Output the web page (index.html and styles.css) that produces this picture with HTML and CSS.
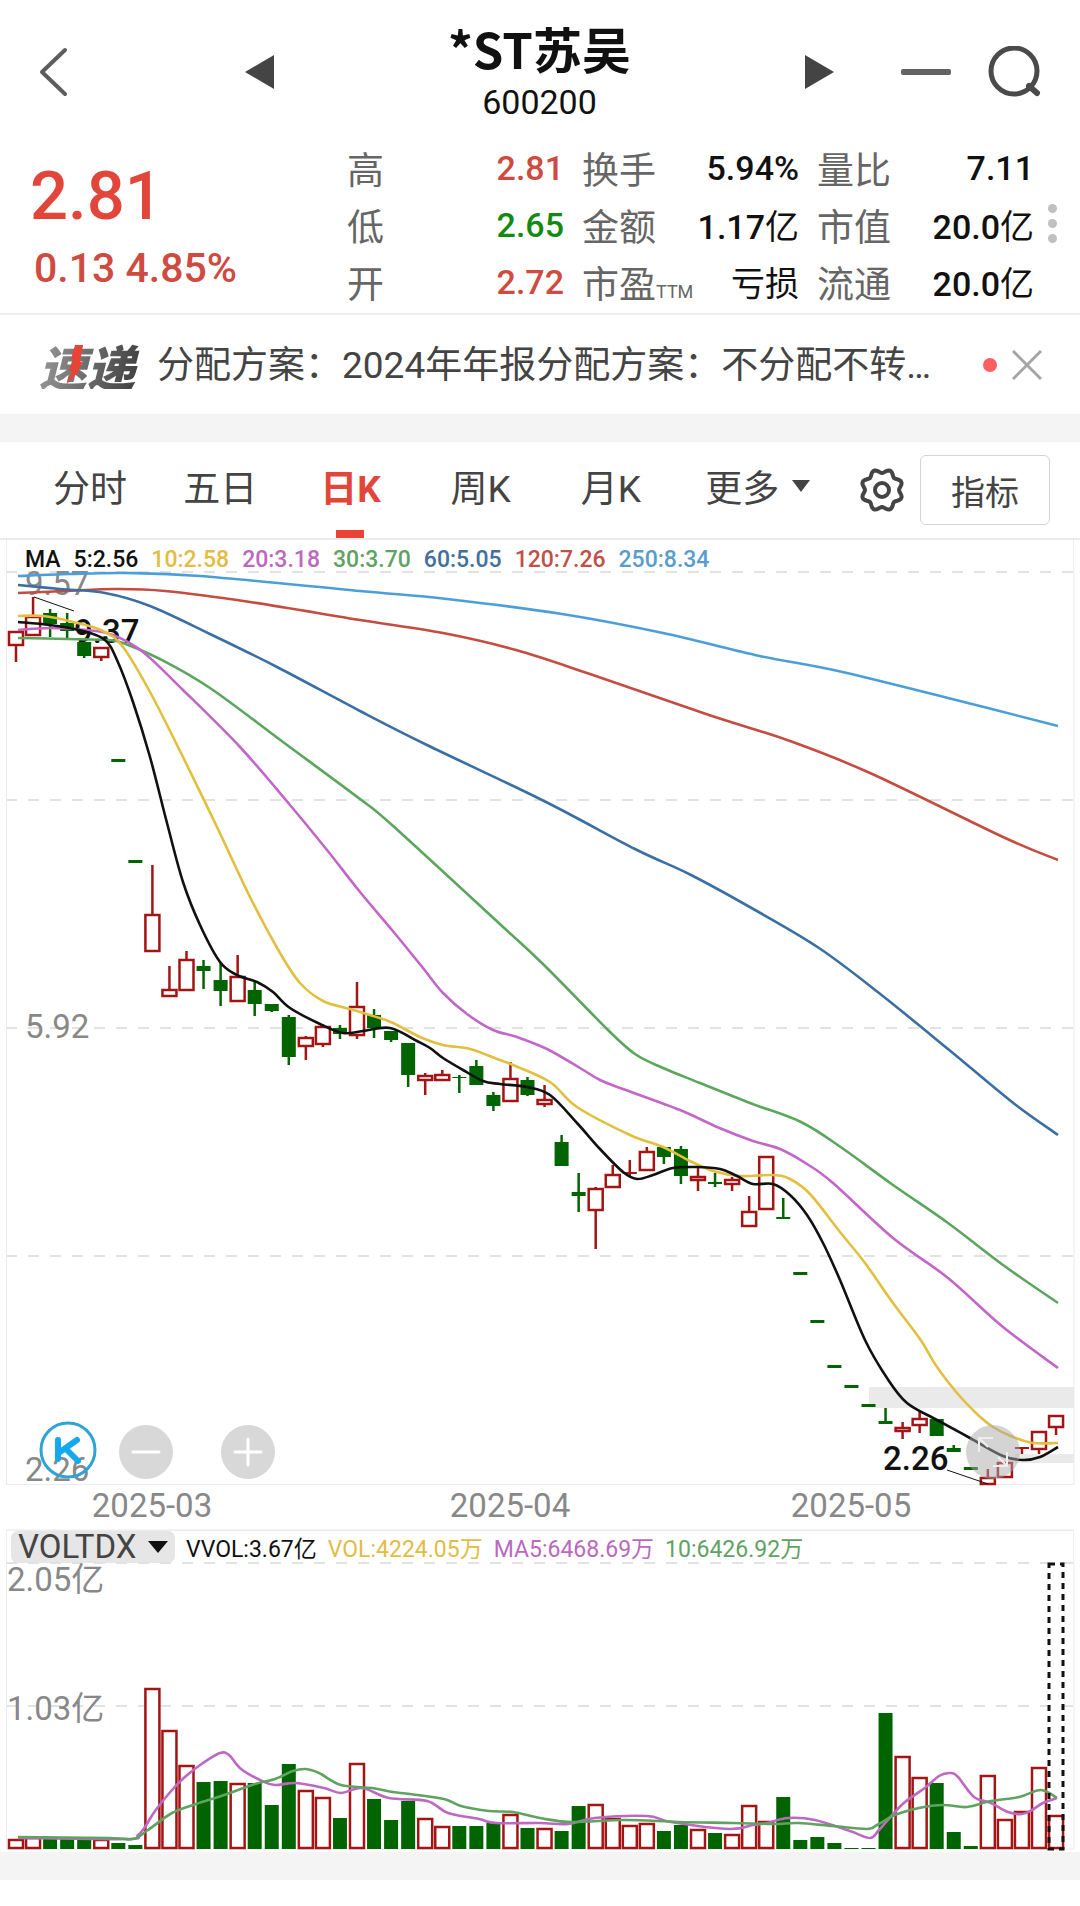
FILE: index.html
```html
<!DOCTYPE html>
<html lang="zh-CN">

<head>
    <meta charset="UTF-8">
    <meta name="viewport" content="width=device-width, initial-scale=1.0">
    <title>*ST苏吴 600200</title>
    <link rel="stylesheet" href="styles.css">
</head>

<body>
    <header class="topbar">
        <button class="icon-btn back" aria-label="返回">
            <svg width="30" height="50" viewBox="0 0 30 50"><path d="M27 3 L4 25 L27 47" fill="none" stroke="#5c5c5c" stroke-width="4" stroke-linecap="round" stroke-linejoin="round"/></svg>
        </button>
        <button class="icon-btn prev" aria-label="上一只">
            <svg width="30" height="34" viewBox="0 0 30 34"><path d="M30 0 V34 L1 17 Z" fill="#444"/></svg>
        </button>
        <div class="stock">
            <h1>*ST苏吴</h1>
            <span class="code">600200</span>
        </div>
        <button class="icon-btn next" aria-label="下一只">
            <svg width="30" height="34" viewBox="0 0 30 34"><path d="M0 0 V34 L29 17 Z" fill="#444"/></svg>
        </button>
        <button class="icon-btn minus" aria-label="删除自选">
            <svg width="50" height="6" viewBox="0 0 50 6"><rect width="50" height="6" rx="2" fill="#626262"/></svg>
        </button>
        <button class="icon-btn search" aria-label="搜索">
            <svg width="54" height="52" viewBox="0 0 54 52"><circle cx="26" cy="25" r="23" fill="none" stroke="#4a4a4a" stroke-width="5"/><path d="M41 40 L49 47" stroke="#4a4a4a" stroke-width="6" stroke-linecap="round"/></svg>
        </button>
    </header>

    <section class="quote">
        <div class="price">
            <div class="now">2.81</div>
            <div class="change">0.13 4.85%</div>
        </div>
        <dl class="stats">
            <div><dt>高</dt><dd class="up">2.81</dd></div>
            <div><dt>换手</dt><dd>5.94%</dd></div>
            <div><dt>量比</dt><dd>7.11</dd></div>
            <div><dt>低</dt><dd class="down">2.65</dd></div>
            <div><dt>金额</dt><dd>1.17<span>亿</span></dd></div>
            <div><dt>市值</dt><dd>20.0<span>亿</span></dd></div>
            <div><dt>开</dt><dd class="up">2.72</dd></div>
            <div><dt>市盈<small>TTM</small></dt><dd><span>亏损</span></dd></div>
            <div><dt>流通</dt><dd>20.0<span>亿</span></dd></div>
        </dl>
        <button class="icon-btn dots" aria-label="更多行情"><i></i><i></i><i></i></button>
    </section>

    <section class="news">
        <span class="news-logo">速递
            <svg class="bolt" viewBox="0 0 20 40"><path d="M11 0 H19 L16 17 H19 L14 25 H16 L2 40 L8 26 H5 L9 14 H7 Z" fill="#e94335"/></svg>
        </span>
        <a class="news-text" href="#">分配方案：2024年年报分配方案：不分配不转…</a>
        <span class="red-dot"></span>
        <button class="icon-btn" aria-label="关闭">
            <svg width="30" height="30" viewBox="0 0 30 30"><path d="M1 1 L29 29 M29 1 L1 29" stroke="#a5a5a5" stroke-width="3"/></svg>
        </button>
    </section>

    <nav class="tabs">
        <button class="tab">分时</button>
        <button class="tab">五日</button>
        <button class="tab active">日K</button>
        <button class="tab">周K</button>
        <button class="tab">月K</button>
        <button class="tab more">更多<svg width="18" height="12" viewBox="0 0 18 12"><path d="M0 0 H18 L9 12 Z" fill="#444"/></svg></button>
        <button class="icon-btn gear" aria-label="设置">
            <svg width="46" height="48" viewBox="-23 -24 46 48"><path id="gear" fill="none" stroke="#444" stroke-width="4" stroke-linejoin="round"/><circle r="7" fill="none" stroke="#444" stroke-width="4"/></svg>
        </button>
        <button class="indicator">指标</button>
    </nav>

    <section class="legend">
        <span>MA</span>
        <span>5:2.56</span>
        <span class="ma10">10:2.58</span>
        <span class="ma20">20:3.18</span>
        <span class="ma30">30:3.70</span>
        <span class="ma60">60:5.05</span>
        <span class="ma120">120:7.26</span>
        <span class="ma250">250:8.34</span>
    </section>

    <section class="chart">
        <svg id="kline" viewBox="0 570 1080 960"></svg>
        <button class="float k-btn" aria-label="K线">
            <svg viewBox="0 0 58 58"><circle cx="29" cy="29" r="27" fill="none" stroke="#2fa3d8" stroke-width="3"/><path d="M19 19 V38 M38 19 L21 31 M27 28 L39 40" fill="none" stroke="#14a9ef" stroke-width="6" stroke-linecap="round"/></svg>
        </button>
        <button class="float zoom-out" aria-label="缩小">
            <svg viewBox="0 0 54 54"><path d="M14 27 H40" stroke="#fff" stroke-width="3" stroke-linecap="round"/></svg>
        </button>
        <button class="float zoom-in" aria-label="放大">
            <svg viewBox="0 0 54 54"><path d="M14 27 H40 M27 14 V40" stroke="#fff" stroke-width="3" stroke-linecap="round"/></svg>
        </button>
        <button class="float expand" aria-label="全屏">
            <svg viewBox="0 0 54 54"><path d="M13 27 V13 H27 M14 14 L22 22 M41 27 V41 H27 M40 40 L32 32" fill="none" stroke="#eee" stroke-width="2"/></svg>
        </button>
    </section>

    <section class="legend vol-legend">
        <button class="voltdx">VOLTDX<svg width="20" height="12" viewBox="0 0 20 12"><path d="M0 0 H20 L10 12 Z" fill="#111"/></svg></button>
        <span>VVOL:3.67亿</span>
        <span class="ma10">VOL:4224.05万</span>
        <span class="ma20">MA5:6468.69万</span>
        <span class="ma30">10:6426.92万</span>
    </section>
    <section class="chart">
        <svg id="volume" viewBox="0 1562 1080 290"></svg>
    </section>
    <div class="band"></div>

    <script src="script.js"></script>
</body>

</html>
```

FILE: styles.css
```css
* {
    box-sizing: border-box;
}

body {
    margin: 0;
    background: #fff;
    color: #111;
    font-family: Roboto, "Noto Sans CJK SC", sans-serif;
}

button {
    padding: 0;
    border: none;
    background: none;
    color: inherit;
    font-family: inherit;
    cursor: pointer;
}

svg {
    display: block;
}

.topbar {
    display: flex;
    align-items: center;
    height: 144px;
    padding: 0 38px;
}

.prev {
    margin-left: 176px;
}

.stock {
    flex: 1;
    padding-top: 4px;
    text-align: center;
}

.stock h1 {
    margin: 0;
    font-family: "Noto Sans CJK SC", sans-serif;
    font-size: 49px;
    line-height: 56px;
    font-weight: 700;
}

.code {
    display: block;
    font-size: 34px;
    line-height: 52px;
}

.minus {
    margin-left: 66px;
}

.search {
    margin-left: 37px;
}

/* quote */
.quote {
    position: relative;
    display: flex;
    height: 171px;
    padding: 0 46px 0 30px;
    border-bottom: 2px solid #ececec;
}

.price {
    flex: 0 0 317px;
    color: #e2463a;
    font-weight: 500;
}

.now {
    padding-top: 12px;
    font-size: 67px;
    line-height: 80px;
}

.change {
    padding-left: 4px;
    font-size: 41px;
    line-height: 64px;
    color: #cf4a40;
}

.stats {
    flex: 1;
    display: grid;
    grid-template-columns: repeat(3, 1fr);
    grid-auto-rows: 57px;
    column-gap: 18px;
    margin: -5px 0 0;
}

.stats div {
    display: flex;
    justify-content: space-between;
    align-items: center;
    white-space: nowrap;
}

.stats dt {
    color: #666;
    font-size: 37px;
}

.stats small {
    font-size: 18px;
}

.stats dd {
    margin: 0;
    font-size: 34px;
    font-weight: 500;
}

.stats dd span {
    font-weight: 400;
}

.stats .up {
    color: #cf4a40;
}

.stats .down {
    color: #128a12;
}

.dots {
    position: absolute;
    right: 23px;
    top: 60px;
    display: grid;
    gap: 6px;
}

.dots i {
    width: 9px;
    height: 9px;
    border-radius: 50%;
    background: #c0c0c0;
}

/* news */
.news {
    display: flex;
    align-items: center;
    height: 127px;
    padding: 0 38px 0 39px;
    border-bottom: 28px solid #f4f4f4;
}

.news-logo {
    position: relative;
    flex: 0 0 118px;
    font-family: "Noto Sans CJK SC", sans-serif;
    font-size: 48px;
    line-height: 48px;
    font-weight: 900;
    font-style: italic;
    color: transparent;
    background: linear-gradient(100deg, #999, #444 80%);
    background-clip: text;
    -webkit-background-clip: text;
}

.bolt {
    position: absolute;
    left: 25px;
    top: 4px;
    width: 20px;
    height: 40px;
}

.news-text {
    flex: 1;
    overflow: hidden;
    padding-top: 3px;
    color: #444;
    font-size: 37px;
    line-height: 54px;
    white-space: nowrap;
    text-decoration: none;
}

.red-dot {
    width: 14px;
    height: 14px;
    margin: 0 15px 0 26px;
    border-radius: 50%;
    background: #ff5f5f;
}

/* tabs */
.tabs {
    display: flex;
    align-items: center;
    height: 98px;
    padding: 0 30px 0 25px;
    border-bottom: 2px solid #ececec;
}

.tab {
    position: relative;
    flex: 0 0 12.7%;
    height: 96px;
    padding-bottom: 8px;
    color: #444;
    font-size: 37px;
}

.tab.active {
    color: #e2463a;
    font-weight: 700;
}

.tab.active::after {
    content: "";
    position: absolute;
    left: 50%;
    bottom: 0;
    width: 28px;
    height: 8px;
    margin-left: -14px;
    background: #e94335;
}

.tab.more {
    display: flex;
    flex-basis: 16%;
    align-items: center;
    justify-content: center;
    gap: 13px;
}

.gear {
    margin-left: auto;
    margin-right: 15px;
}

.indicator {
    width: 130px;
    height: 70px;
    border: 1px solid #d4d4d4;
    border-radius: 6px;
    color: #444;
    font-size: 34px;
}

/* charts */
.legend {
    display: flex;
    align-items: center;
    gap: 13px;
    height: 30px;
    margin: 0 6px;
    padding: 9px 0 0 18px;
    border: 1px solid #eee;
    border-width: 0 1px;
    font-size: 23px;
    line-height: 24px;
    font-weight: 500;
    white-space: nowrap;
}

.ma10 {
    color: #e0bd44;
}

.ma20 {
    color: #bb69be;
}

.ma30 {
    color: #60a262;
}

.ma60 {
    color: #41709f;
}

.ma120 {
    color: #bf5147;
}

.ma250 {
    color: #5a9dcc;
}

.chart {
    position: relative;
}

.chart > svg {
    width: 100%;
    height: auto;
    overflow: visible;
}

.chart text {
    font-size: 33px;
    fill: #888;
}

.chart text.mark {
    font-weight: 500;
    fill: #111;
}

.float {
    position: absolute;
    bottom: calc(5% + 3px);
    width: 5%;
    border-radius: 50%;
    background: #d8d8d8;
}

.k-btn {
    left: 3.6%;
    width: 58px;
    background: none;
}

.zoom-out {
    left: 11%;
}

.zoom-in {
    left: calc(20% + 5px);
}

.expand {
    left: calc(89% + 5px);
    background: rgba(170, 170, 170, 0.5);
}

.vol-legend {
    gap: 11px;
    height: 32px;
    padding: 0 0 0 4px;
    border-top-width: 1px;
    font-weight: 400;
}

.vol-legend span {
    padding-top: 6px;
}

.voltdx {
    display: flex;
    align-items: center;
    justify-content: space-between;
    width: 164px;
    height: 32px;
    padding: 0 7px;
    border-radius: 7px;
    background: #e6e6e6;
    color: #444;
    font-size: 33px;
    line-height: 32px;
}

.band {
    height: 28px;
    background: #f4f4f4;
}
```

FILE: script.js
```js
const RED = '#a31515';
const GREEN = '#006400';
const STEP = 17.05;

// [colour, high, body top, body bottom, low]
const candles = [
    ['r', 631, 631, 646, 662], ['r', 597, 616, 636, 636], ['g', 609, 613, 624, 637], ['g', 613, 623, 631, 638],
    ['g', 642, 642, 656, 658], ['r', 647, 647, 658, 661], ['g', 759, 759, 762, 762], ['g', 860, 860, 863, 863],
    ['r', 865, 914, 952, 952], ['r', 966, 989, 997, 997], ['r', 951, 959, 991, 991], ['g', 960, 966, 971, 989],
    ['g', 963, 980, 991, 1006], ['r', 955, 976, 1002, 1002], ['g', 982, 990, 1004, 1016], ['g', 1004, 1004, 1011, 1012],
    ['g', 1015, 1017, 1057, 1065], ['r', 1036, 1037, 1047, 1060], ['r', 1024, 1026, 1045, 1047], ['g', 1025, 1028, 1034, 1039],
    ['r', 982, 1006, 1036, 1039], ['g', 1009, 1015, 1028, 1038], ['g', 1031, 1031, 1040, 1042], ['g', 1043, 1043, 1075, 1087],
    ['r', 1073, 1075, 1081, 1095], ['r', 1070, 1074, 1081, 1081], ['g', 1075, 1077, 1078, 1093], ['g', 1060, 1066, 1085, 1085],
    ['g', 1092, 1095, 1106, 1111], ['r', 1062, 1078, 1102, 1102], ['g', 1077, 1080, 1095, 1096], ['r', 1085, 1099, 1105, 1107],
    ['g', 1135, 1142, 1166, 1166], ['g', 1173, 1192, 1196, 1212], ['r', 1187, 1188, 1211, 1249], ['r', 1165, 1174, 1188, 1188],
    ['r', 1160, 1172, 1174, 1177], ['r', 1147, 1151, 1171, 1171], ['g', 1147, 1147, 1157, 1164], ['g', 1146, 1149, 1176, 1184],
    ['r', 1167, 1176, 1181, 1191], ['g', 1173, 1182, 1184, 1187], ['r', 1177, 1179, 1185, 1191], ['r', 1196, 1211, 1227, 1227],
    ['r', 1156, 1156, 1210, 1210], ['g', 1198, 1217, 1219, 1219], ['g', 1272, 1272, 1275, 1275], ['g', 1320, 1320, 1323, 1323],
    ['g', 1365, 1365, 1368, 1368], ['g', 1385, 1385, 1388, 1388], ['g', 1404, 1404, 1407, 1407], ['g', 1408, 1421, 1424, 1424],
    ['r', 1422, 1427, 1432, 1439], ['r', 1411, 1418, 1426, 1433], ['g', 1419, 1419, 1436, 1436], ['g', 1445, 1448, 1452, 1452],
    ['g', 1467, 1467, 1470, 1470], ['r', 1469, 1477, 1485, 1485], ['r', 1462, 1462, 1478, 1478], ['r', 1447, 1447, 1449, 1454],
    ['r', 1431, 1431, 1450, 1454], ['r', 1415, 1415, 1428, 1435]
];

// top of each volume bar
const volumes = [
    1839, 1837, 1839, 1839, 1839, 1839, 1843, 1845, 1688, 1730, 1765, 1782, 1781, 1783, 1783, 1805,
    1764, 1790, 1797, 1818, 1763, 1799, 1820, 1801, 1818, 1826, 1826, 1826, 1823, 1814, 1828, 1828,
    1831, 1806, 1804, 1818, 1825, 1823, 1831, 1825, 1829, 1833, 1834, 1805, 1821, 1797, 1840, 1837,
    1843, 1848, 1848, 1713, 1756, 1777, 1783, 1832, 1846, 1775, 1819, 1811, 1767, 1815
];

const priceLines = [
    ['#4a9fd8', '18,576 70,574 125,573 200,576 360,591 447,599 562,614 663,633 755,655 838,671 948,698 1058,726'],
    ['#c44c40', '18,593 65,591 115,589 165,591 250,602 360,620 443,633 516,650 590,674 709,715 787,740 870,773 1003,837 1058,860'],
    ['#3b6fa3', '18,585 60,589 105,593 150,606 210,634 277,667 360,711 427,745 544,801 635,849 691,875 755,910 819,948 879,993 948,1049 1012,1102 1058,1135'],
    ['#5ba65d', '18,638 67,639 107,640 123,643 160,659 210,688 283,742 360,799 392,825 502,926 544,965 608,1030 635,1054 663,1068 700,1083 750,1103 801,1122 842,1148 893,1185 948,1223 1003,1265 1058,1303'],
    ['#c266c8', '18,630 50,628 87,630 113,635 143,652 183,690 240,747 290,805 327,850 360,892 392,930 423,968 443,993 467,1014 493,1030 517,1037 547,1049 580,1068 600,1080 623,1089 680,1110 717,1127 753,1141 780,1149 807,1164 833,1183 893,1238 948,1278 1003,1327 1058,1368'],
    ['#e2bf3f', '18,616 43,616 73,622 103,631 123,647 150,692 183,757 217,827 250,897 280,953 300,983 323,1001 350,1009 370,1015 393,1023 420,1037 443,1045 470,1049 497,1059 513,1065 550,1082 577,1107 630,1135 663,1147 690,1161 713,1171 740,1176 773,1175 790,1179 810,1194 840,1232 865,1263 893,1303 920,1339 937,1367 957,1393 977,1414 993,1427 1013,1437 1033,1443 1058,1443'],
    ['#111', '18,622 50,625 83,631 105,640 117,660 133,702 150,757 167,823 183,882 200,925 220,962 237,975 257,982 273,992 290,1008 320,1024 343,1033 363,1031 390,1028 417,1041 430,1048 443,1058 463,1070 483,1081 500,1084 527,1087 550,1095 577,1123 600,1149 623,1172 637,1179 653,1175 673,1168 697,1167 720,1169 737,1176 753,1184 773,1184 790,1195 807,1215 823,1243 840,1280 865,1340 887,1378 907,1403 937,1420 970,1438 1003,1456 1023,1460 1040,1457 1058,1447']
];

const volumeLines = [
    ['#bd68c2', '18,1838 127,1839 138,1835 145,1827 155,1811 172,1790 186,1776 203,1763 220,1753 229,1755 241,1769 262,1781 275,1785 296,1783 324,1788 341,1793 362,1788 389,1798 427,1801 448,1813 479,1819 496,1823 540,1823 568,1824 595,1818 647,1816 671,1822 729,1829 753,1825 767,1823 788,1818 815,1820 850,1831 870,1838 879,1830 895,1812 905,1802 926,1787 939,1776 950,1773 958,1777 974,1797 991,1803 1008,1812 1022,1814 1032,1810 1043,1803 1057,1798'],
    ['#5fa361', '18,1837 110,1838 133,1839 148,1830 172,1813 196,1804 224,1795 255,1784 275,1779 293,1771 306,1769 319,1773 341,1785 372,1788 393,1792 410,1794 444,1799 461,1806 489,1811 513,1812 540,1818 571,1822 626,1820 678,1822 733,1823 774,1824 798,1823 833,1826 867,1829 877,1825 895,1815 919,1808 943,1805 967,1807 991,1801 1019,1797 1041,1790 1057,1798']
];

// smooth curve through "x,y x,y ..." points
function curve(points) {
    const p = points.split(' ').map(s => s.split(',').map(Number));
    let d = `M${p[0]}`;
    for (let i = 0; i < p.length - 1; i++) {
        const a = p[i - 1] || p[i], b = p[i], c = p[i + 1], e = p[i + 2] || c;
        d += ` C${b[0] + (c[0] - a[0]) / 6},${b[1] + (c[1] - a[1]) / 6} ${c[0] - (e[0] - b[0]) / 6},${c[1] - (e[1] - b[1]) / 6} ${c}`;
    }
    return d;
}

function drawLines(lines) {
    return lines.map(([color, pts]) => `<path d="${curve(pts)}" fill="none" stroke="${color}" stroke-width="2.6"/>`).join('');
}

function grid(y) {
    return `<path d="M6 ${y} H1074" stroke="#e2e2e2" stroke-width="2" stroke-dasharray="11 11"/>`;
}

function bar(color, x, top, bottom) {
    if (color === 'g' || bottom - top < 4) {
        return `<rect x="${x - 7}" y="${top}" width="14" height="${bottom - top}" fill="${color === 'g' ? GREEN : RED}"/>`;
    }
    return `<rect x="${x - 7}" y="${top + 1}" width="14" height="${bottom - top - 2}" fill="#fff" stroke="${RED}" stroke-width="2.5"/>`;
}

function drawKline() {
    let s = [572, 800, 1028, 1256].map(grid).join('');
    s += '<path d="M6.5 570 V1484 M1074 570 V1484 M6 1484.5 H1074 M6 1530 H1074" stroke="#ebebeb" fill="none"/>';
    s += '<rect x="869" y="1387" width="205" height="21" fill="#eaeaea"/><rect x="1015" y="1454" width="59" height="9" fill="#eaeaea"/>';
    s += '<text x="25" y="595">9.57</text><text x="25" y="1038">5.92</text><text x="25" y="1481">2.26</text>';
    s += '<text class="mark" x="74" y="643">9.37</text><text class="mark" x="883" y="1470">2.26</text>';
    candles.forEach(([color, high, top, bottom, low], i) => {
        const x = 16 + i * STEP;
        s += `<path d="M${x} ${high} V${low}" stroke="${color === 'g' ? GREEN : RED}" stroke-width="2.5"/>`;
        s += bar(color, x, top, bottom);
    });
    s += drawLines(priceLines);
    s += '<path d="M34 597 L74 611 M947 1470 L988 1484" stroke="#111" stroke-width="1"/>';
    [[152, '2025-03'], [510, '2025-04'], [851, '2025-05']].forEach(([x, t]) => {
        s += `<text x="${x}" y="1517" text-anchor="middle">${t}</text>`;
    });
    document.getElementById('kline').innerHTML = s;
}

function drawVolume() {
    let s = grid(1563) + grid(1706);
    s += '<path d="M6.5 1562 V1849 M1074 1562 V1849 H6" stroke="#ebebeb" fill="none"/>';
    s += '<text x="7" y="1591">2.05亿</text><text x="7" y="1720">1.03亿</text>';
    volumes.forEach((top, i) => {
        s += bar(candles[i][0], 16 + i * STEP, top, 1849);
    });
    s += drawLines(volumeLines);
    s += '<rect x="1049" y="1564" width="14" height="285" fill="none" stroke="#111" stroke-width="3" stroke-dasharray="6 5"/>';
    document.getElementById('volume').innerHTML = s;
}

// eight-lobed outline of the settings icon
function drawGear() {
    let d = '';
    for (let a = 0; a < 360; a += 5) {
        const t = a * Math.PI / 180;
        const r = 19 - 2 * Math.cos(8 * t);
        d += `${a ? 'L' : 'M'}${(r * Math.cos(t)).toFixed(1)} ${(r * Math.sin(t)).toFixed(1)}`;
    }
    document.getElementById('gear').setAttribute('d', d + 'Z');
}

drawKline();
drawVolume();
drawGear();
```
